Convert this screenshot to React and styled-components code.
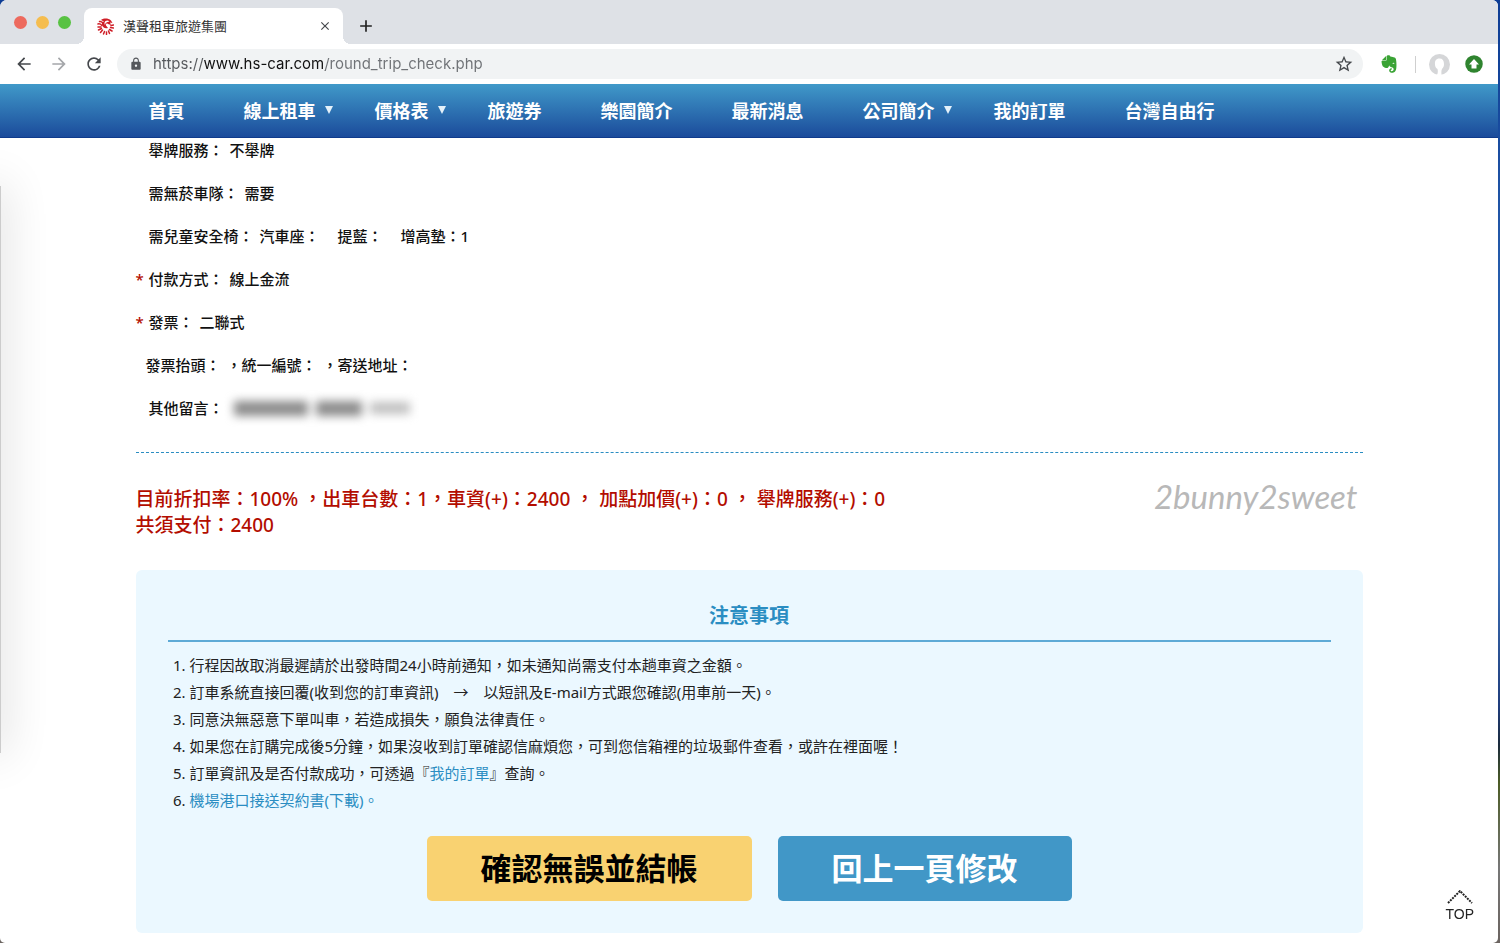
import React from "react";
import styled, { createGlobalStyle, css } from "styled-components";
import { MdArrowBack, MdArrowForward, MdRefresh, MdLock, MdStarBorder, MdClose, MdAdd } from "react-icons/md";
import { FaEvernote } from "react-icons/fa";

const GlobalStyle = createGlobalStyle`
  * { box-sizing: border-box; }
  body {
    margin: 0;
    color: #111;
    font-family: "Noto Sans", "Noto Sans CJK TC", sans-serif;
    background: linear-gradient(#0d3c94 0, #2a62b0 35%, #3f74bb 60%, #1f3d7c 75%, #1b2b3c 79%, #4c5c26 83%, #777 92%, #6b6460 100%);
  }
  button { border: 0; padding: 0; font: inherit; background: none; cursor: pointer; }
  a { text-decoration: none; }
  ul, ol, p, h2 { margin: 0; padding: 0; }
`;

const Window = styled.div`
  display: flex;
  flex-direction: column;
  min-height: 100vh;
  margin-right: 2px;
  background: #fff;
  border-radius: 7px 6px 5px 5px;
  overflow: hidden;
`;

const TabStrip = styled.div`
  display: flex;
  align-items: center;
  height: 44px;
  padding-left: 14px;
  background: #dee1e6;
`;

const Lights = styled.div`
  display: flex;
  gap: 9px;
  width: 70px;
`;

const Light = styled.button`
  width: 13px;
  height: 13px;
  border-radius: 50%;
  background: ${(p) => p.$color};
`;

const Tab = styled.div`
  position: relative;
  align-self: flex-end;
  display: flex;
  align-items: center;
  width: 259px;
  height: 36px;
  padding: 0 11px 0 13px;
  border-radius: 8px 8px 0 0;
  background: #fff;
  font-size: 13px;
  color: #333;

  &::before,
  &::after {
    content: "";
    position: absolute;
    bottom: 0;
    width: 8px;
    height: 8px;
  }
  &::before { right: 100%; background: radial-gradient(circle at 0 0, transparent 8px, #fff 8px); }
  &::after { left: 100%; background: radial-gradient(circle at 100% 0, transparent 8px, #fff 8px); }
`;

const TabTitle = styled.span`
  flex: 1;
  padding: 0 0 2px 9px;
`;

const IconButton = styled.button`
  display: flex;
  align-items: center;
  justify-content: center;
  width: ${(p) => p.$size || 20}px;
  height: ${(p) => p.$size || 20}px;
  color: ${(p) => p.$color || "#45484c"};
`;

const NewTab = styled(IconButton)`
  margin: 8px 0 0 13px;
  color: #222;
  stroke: #222;
`;

const CloseTab = styled(IconButton)`
  stroke: #45484c;
`;

const Toolbar = styled.div`
  display: flex;
  align-items: center;
  height: 40px;
  padding: 0 15px 0 14px;
  background: #fff;
`;

const History = styled.div`
  display: flex;
  gap: 15px;
`;

const Address = styled.label`
  flex: 1;
  display: flex;
  align-items: center;
  gap: 10px;
  height: 30px;
  margin: 0 16px 0 13px;
  padding: 0 9px 0 12px;
  border-radius: 15px;
  background: #f1f3f4;
  color: #55585c;
`;

const AddressInput = styled.input`
  flex: 1;
  border: 0;
  padding: 0;
  outline: 0;
  font: 15px Inter, "Liberation Sans", sans-serif;
  line-height: 24px;
  color: transparent;
  background: linear-gradient(90deg, #55585c 51px, #111 51px, #111 172px, #6f7276 172px);
  background-clip: text;
`;

const Extensions = styled.div`
  display: flex;
  align-items: center;
`;

const Divider = styled.span`
  width: 1px;
  height: 17px;
  margin: 0 13px 0 16px;
  background: #cfcfcf;
`;

const Gap = styled.span`
  width: 15px;
`;

const Nav = styled.nav`
  background: linear-gradient(#4099c9, #1b4b9b);
  border-bottom: 1px solid #0f3b8c;
`;

const Container = styled.div`
  width: 100%;
  max-width: 1227px;
  margin: 0 auto;
`;

const Menu = styled.ul`
  display: flex;
  height: 53px;
  align-items: center;
  padding: 0 0 2px 13px;
  list-style: none;
`;

const MenuItem = styled.li`
  display: flex;
  align-items: center;
`;

const MenuLink = styled.a`
  color: #fff;
  font-size: 18px;
  font-weight: 700;
  white-space: nowrap;
`;

const Trail = styled.span`
  display: flex;
  width: 59px;
  padding-left: 9px;
`;

const Page = styled.main`
  position: relative;
  flex: 1;
`;

const SideShadow = styled.div`
  position: absolute;
  top: 48px;
  bottom: 190px;
  left: -19px;
  width: 20px;
  background: #ccc;
  box-shadow: 0 0 46px 2px rgba(0, 0, 0, 0.16);
`;

const Details = styled.div`
  display: flex;
  flex-direction: column;
  gap: 19px;
  padding-bottom: 32px;
  border-bottom: 1px dashed #2a8dc2;
`;

const Row = styled.p`
  display: flex;
  font-size: 15px;
  font-weight: 500;
  line-height: 24px;
`;

const Mark = styled.span`
  width: ${(p) => (p.$narrow ? 10 : 13)}px;
  color: #b30d00;
`;

const Field = styled.span`
  margin-right: ${(p) => p.$gap || 6}px;
`;

const Redacted = styled.span`
  display: flex;
  align-items: center;
  gap: 8px;
  padding-left: 4px;
  filter: blur(5px);
`;

const Smudge = styled.span`
  width: ${(p) => p.$width}px;
  height: ${(p) => (p.$light ? 12 : 15)}px;
  background: ${(p) => (p.$light ? "#c0c0c0" : "#8c8c8c")};
`;

const Summary = styled.section`
  display: flex;
  justify-content: space-between;
  padding: 33px 5px 32px 0;
  color: #b30d00;
  font-size: 19px;
  font-weight: 500;
  line-height: 26px;
`;

const Charges = styled.p`
  white-space: pre-wrap;
`;

const Watermark = styled.span`
  align-self: center;
  height: 52px;
  margin-top: -32px;
  color: #b8b8b8;
  font: italic 400 33px/52px Lato, sans-serif;
`;

const Notice = styled.section`
  padding: 32px;
  border-radius: 6px;
  background: #ebf8ff;
`;

const NoticeTitle = styled.h2`
  padding-bottom: 11px;
  border-bottom: 2px solid #5eaad6;
  color: #2a8dc2;
  font-size: 20px;
  font-weight: 700;
  line-height: 27px;
  text-align: center;
`;

const Rules = styled.ol`
  padding: 10px 0 22px 22px;
  color: #222;
  font-size: 15px;
  line-height: 27px;
`;

const TextLink = styled.a`
  color: #2a8dc2;
`;

const Actions = styled.div`
  display: flex;
  flex-wrap: wrap;
  justify-content: center;
  gap: 26px;
`;

const ActionButton = styled.button`
  && {
    height: 65px;
    padding: 0 54px 4px;
    border-radius: 5px;
    font-size: 31px;
    font-weight: 700;
    ${(p) =>
      p.$primary
        ? css`background: #f9d271; color: #000;`
        : css`background: #4197c7; color: #fff;`}
  }
`;

const ToTop = styled.a`
  position: fixed;
  right: 26px;
  bottom: 19px;
  display: flex;
  flex-direction: column;
  align-items: center;
  color: #222;
  font: 14px/20px "Liberation Sans", sans-serif;
`;

const Favicon = () => (
  <svg width="17" height="17" viewBox="0 0 34 34" aria-hidden="true">
    <g stroke="#cf1f28" strokeWidth="3" strokeLinecap="round" fill="none">
      <path d="M2 18l6 0M3 24l6-3M7 29l4-5M13 32l2-5M19 33l0-5M25 31l-2-5M30 26l-5-3M33 20l-6-1M33 14l-5 1" />
      <path d="M2 12c3-1 5 0 8 3M5 7c4-1 6 1 8 5" />
    </g>
    <path d="M8 4c6-4 14-4 20 1l3 5-5-1 2 5-6-2c-3-2-5 0-4 3l4 5c-6 2-11-1-12-7-1-4 1-5 4-6z" fill="#cf1f28" />
    <path d="M17 6c3-2 6-1 8 1l-4 1c-3 1-5 3-5 6-2-3-1-6 1-8z" fill="#fff" />
  </svg>
);

const Profile = () => (
  <svg width="21" height="21" viewBox="0 0 42 42" aria-hidden="true">
    <circle cx="21" cy="21" r="21" fill="#d5d6d8" />
    <path d="M21 9c-7 0-10 5-9 12 0 4 2 7 5 9 1 4 1 8-1 12h9c0-3-1-8 1-12 3-3 4-6 4-10 0-7-3-11-9-11z" fill="#fff" />
  </svg>
);

const Update = () => (
  <svg width="18" height="18" viewBox="0 0 36 36" aria-hidden="true">
    <circle cx="18" cy="18" r="17.500" fill="#2f842f" />
    <path d="M18 8l10 11h-5v8H13v-8H8z" fill="#fff" />
  </svg>
);

const Caret = () => (
  <svg width="8" height="8" viewBox="0 0 8 8" aria-hidden="true">
    <path d="M0 0h8L4 8z" fill="#e4f1fa" />
  </svg>
);

const TopArrow = () => (
  <svg width="26" height="14" viewBox="0 0 26 14" aria-hidden="true">
    <path d="M1 13L13 1l12 12" fill="none" stroke="#222" strokeWidth="2" strokeDasharray="2 1" />
  </svg>
);

const menu = [
  ["首頁"],
  ["線上租車", true],
  ["價格表", true],
  ["旅遊券"],
  ["樂園簡介"],
  ["最新消息"],
  ["公司簡介", true],
  ["我的訂單"],
  ["台灣自由行"],
];

export default function App() {
  return (
    <>
      <GlobalStyle />
      <Window>
        <TabStrip>
          <Lights>
            <Light $color="#ed6a5e" aria-label="Close window" />
            <Light $color="#f5bd4f" aria-label="Minimize window" />
            <Light $color="#58c243" aria-label="Zoom window" />
          </Lights>
          <Tab>
            <Favicon />
            <TabTitle>漢聲租車旅遊集團</TabTitle>
            <CloseTab $size={14} aria-label="Close tab"><MdClose size={14} /></CloseTab>
          </Tab>
          <NewTab aria-label="New tab"><MdAdd size={20} /></NewTab>
        </TabStrip>
        <Toolbar>
          <History>
            <IconButton aria-label="Back"><MdArrowBack size={20} /></IconButton>
            <IconButton aria-label="Forward" $color="#a5a7aa"><MdArrowForward size={20} /></IconButton>
            <IconButton aria-label="Reload"><MdRefresh size={20} /></IconButton>
          </History>
          <Address>
            <MdLock size={14} />
            <AddressInput aria-label="Address" readOnly value="https://www.hs-car.com/round_trip_check.php" />
            <IconButton aria-label="Bookmark"><MdStarBorder size={20} /></IconButton>
          </Address>
          <Extensions>
            <IconButton $color="#3aa335" aria-label="Evernote"><FaEvernote size={20} /></IconButton>
            <Divider />
            <IconButton $size={21} aria-label="Profile"><Profile /></IconButton>
            <Gap />
            <IconButton $size={18} aria-label="Update"><Update /></IconButton>
          </Extensions>
        </Toolbar>
        <Nav>
          <Container>
            <Menu>
              {menu.map(([label, hasSub]) => (
                <MenuItem key={label}>
                  <MenuLink href="#">{label}</MenuLink>
                  <Trail>{hasSub && <Caret />}</Trail>
                </MenuItem>
              ))}
            </Menu>
          </Container>
        </Nav>
        <Page>
          <SideShadow />
          <Container>
            <Details>
              <Row><Mark /><Field>舉牌服務：</Field><span>不舉牌</span></Row>
              <Row><Mark /><Field>需無菸車隊：</Field><span>需要</span></Row>
              <Row>
                <Mark />
                <Field>需兒童安全椅：</Field>
                <Field $gap={18}>汽車座：</Field>
                <Field $gap={18}>提藍：</Field>
                <span>增高墊：1</span>
              </Row>
              <Row><Mark>*</Mark><Field>付款方式：</Field><span>線上金流</span></Row>
              <Row><Mark>*</Mark><Field>發票：</Field><span>二聯式</span></Row>
              <Row>
                <Mark $narrow />
                <Field>發票抬頭：</Field>
                <Field>，統一編號：</Field>
                <span>，寄送地址：</span>
              </Row>
              <Row>
                <Mark />
                <Field>其他留言：</Field>
                <Redacted aria-label="已隱藏">
                  <Smudge $width={74} />
                  <Smudge $width={46} />
                  <Smudge $width={40} $light />
                </Redacted>
              </Row>
            </Details>
            <Summary>
              <div>
                <Charges>目前折扣率：100% ，出車台數：1，車資(+)：2400 ， 加點加價(+)：0 ， 舉牌服務(+)：0</Charges>
                <Charges>共須支付：2400</Charges>
              </div>
              <Watermark>2bunny2sweet</Watermark>
            </Summary>
            <Notice>
              <NoticeTitle>注意事項</NoticeTitle>
              <Rules>
                <li>行程因故取消最遲請於出發時間24小時前通知，如未通知尚需支付本趟車資之金額。</li>
                <li>訂車系統直接回覆(收到您的訂車資訊)　→　以短訊及E-mail方式跟您確認(用車前一天)。</li>
                <li>同意決無惡意下單叫車，若造成損失，願負法律責任。</li>
                <li>如果您在訂購完成後5分鐘，如果沒收到訂單確認信麻煩您，可到您信箱裡的垃圾郵件查看，或許在裡面喔！</li>
                <li>訂單資訊及是否付款成功，可透過『<TextLink href="#">我的訂單</TextLink>』查詢。</li>
                <li><TextLink href="#">機場港口接送契約書(下載)。</TextLink></li>
              </Rules>
              <Actions>
                <ActionButton $primary>確認無誤並結帳</ActionButton>
                <ActionButton>回上一頁修改</ActionButton>
              </Actions>
            </Notice>
          </Container>
          <ToTop href="#"><TopArrow />TOP</ToTop>
        </Page>
      </Window>
    </>
  );
}
